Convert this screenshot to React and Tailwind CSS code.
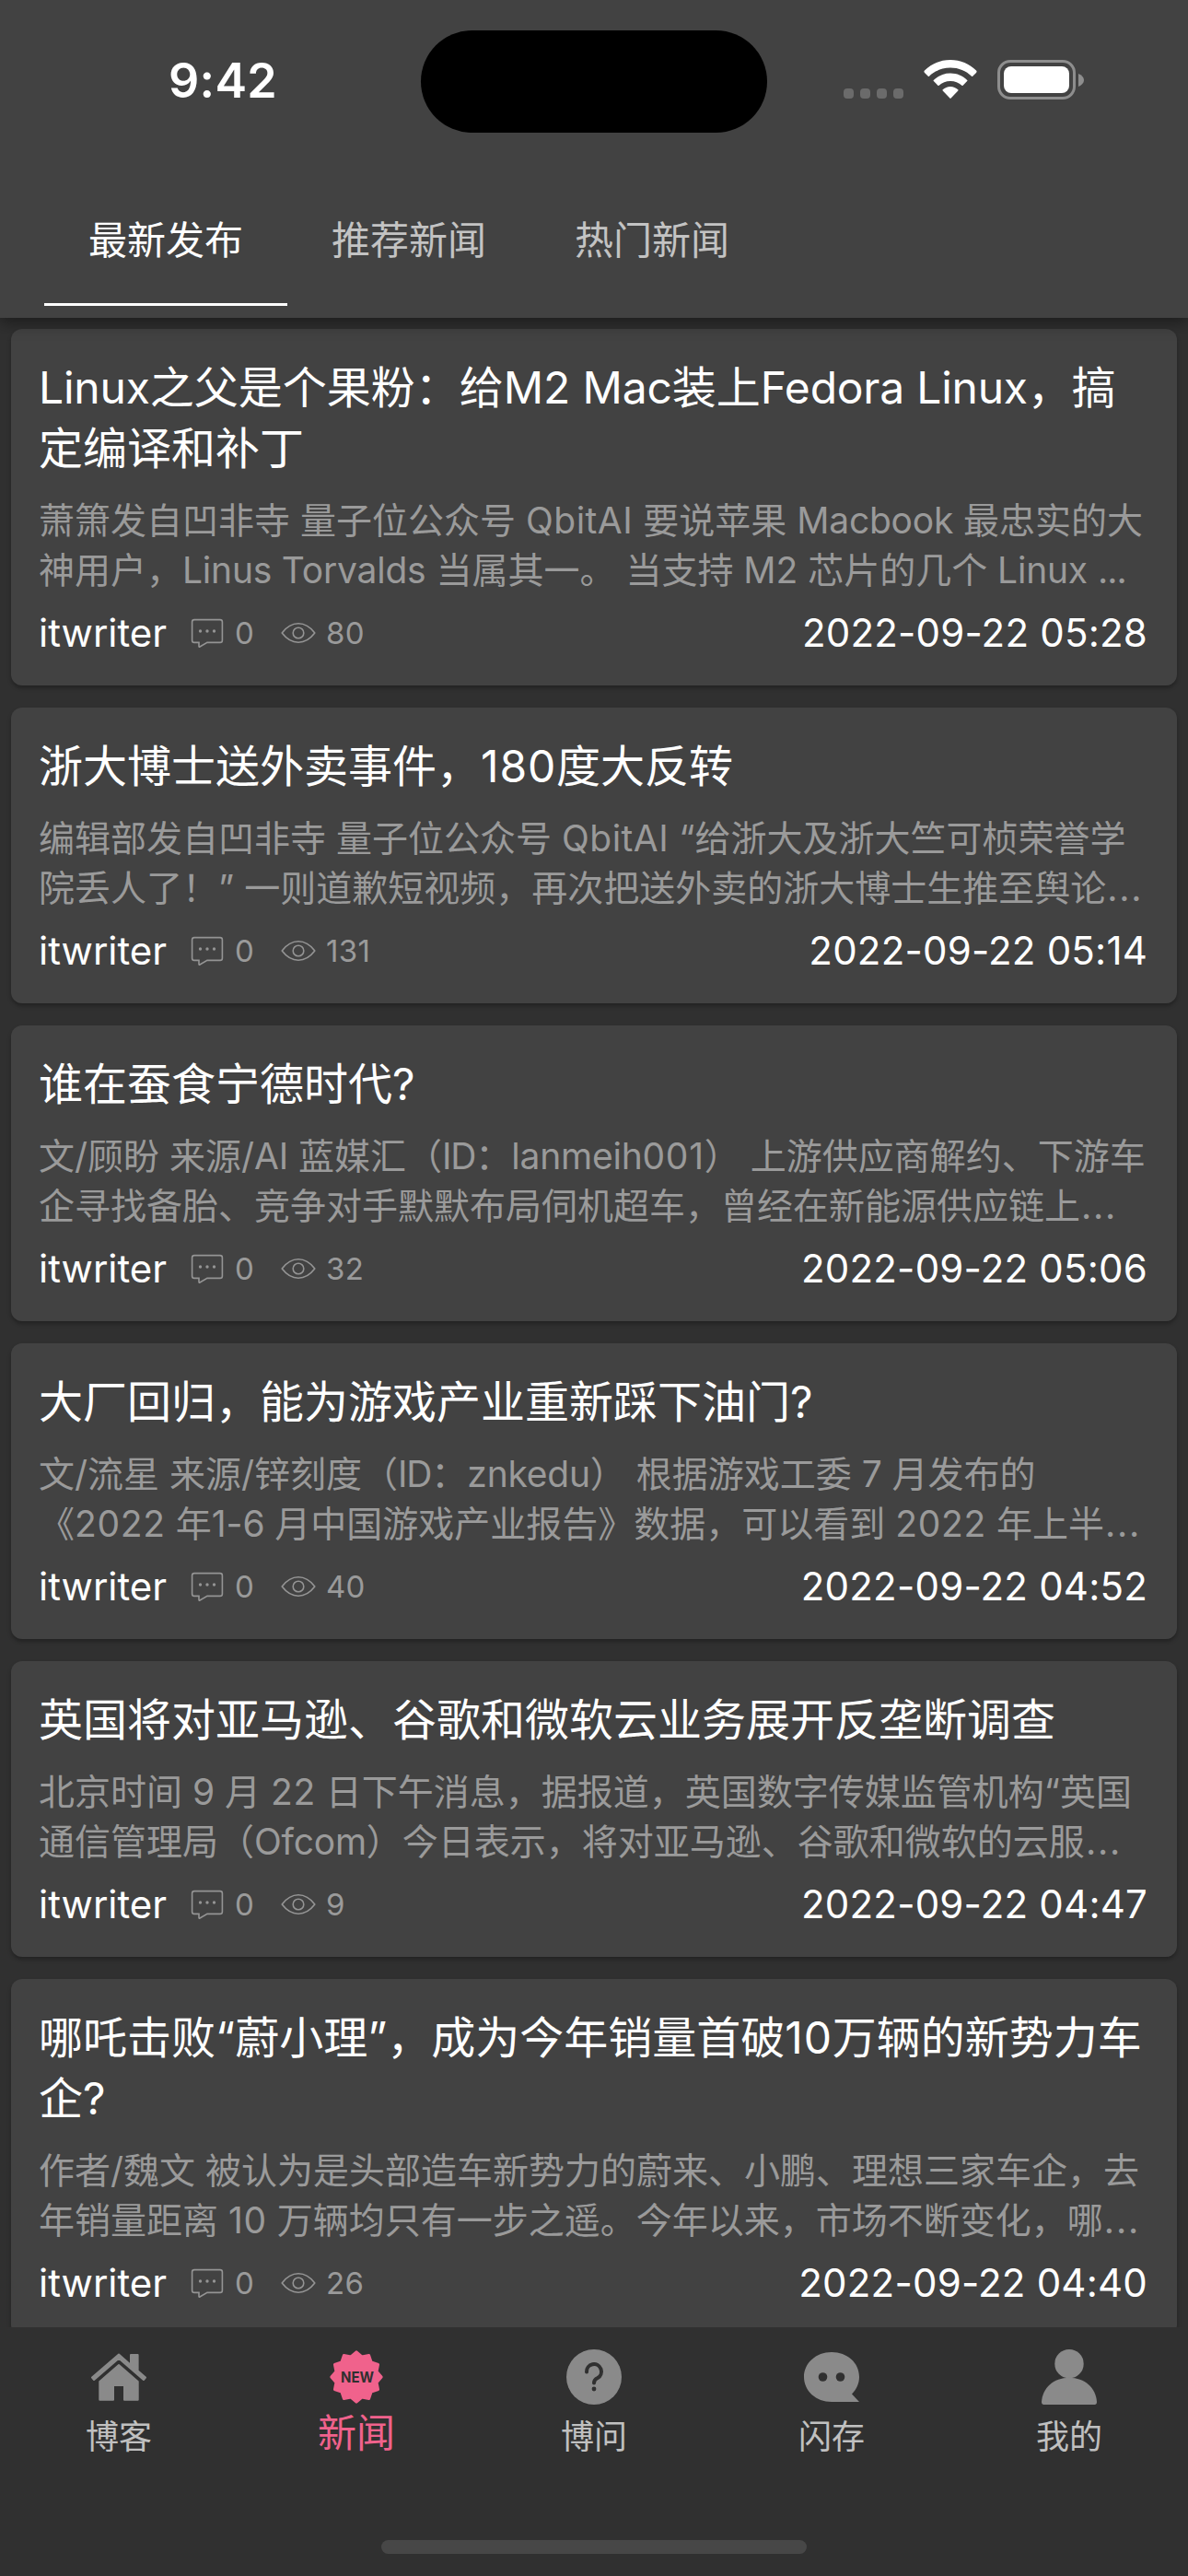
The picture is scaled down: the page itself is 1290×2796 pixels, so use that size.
const ARTICLES = [
  {
    title: ["Linux之父是个果粉：给M2 Mac装上Fedora Linux，搞", "定编译和补丁"],
    summary: ["萧箫发自凹非寺 量子位公众号 QbitAI 要说苹果 Macbook 最忠实的大", "神用户，Linus Torvalds 当属其一。 当支持 M2 芯片的几个 Linux "],
    views: 80,
    time: "05:28",
    tight: true,
  },
  {
    title: ["浙大博士送外卖事件，180度大反转"],
    summary: ["编辑部发自凹非寺 量子位公众号 QbitAI “给浙大及浙大竺可桢荣誉学", "院丢人了！” 一则道歉短视频，再次把送外卖的浙大博士生推至舆论"],
    views: 131,
    time: "05:14",
  },
  {
    title: ["谁在蚕食宁德时代?"],
    summary: ["文/顾盼 来源/AI 蓝媒汇（ID：lanmeih001） 上游供应商解约、下游车", "企寻找备胎、竞争对手默默布局伺机超车，曾经在新能源供应链上"],
    views: 32,
    time: "05:06",
  },
  {
    title: ["大厂回归，能为游戏产业重新踩下油门?"],
    summary: ["文/流星 来源/锌刻度（ID：znkedu） 根据游戏工委 7 月发布的", "《2022 年1-6 月中国游戏产业报告》数据，可以看到 2022 年上半"],
    views: 40,
    time: "04:52",
  },
  {
    title: ["英国将对亚马逊、谷歌和微软云业务展开反垄断调查"],
    summary: ["北京时间 9 月 22 日下午消息，据报道，英国数字传媒监管机构“英国", "通信管理局（Ofcom）今日表示，将对亚马逊、谷歌和微软的云服"],
    views: 9,
    time: "04:47",
  },
  {
    title: ["哪吒击败“蔚小理”，成为今年销量首破10万辆的新势力车", "企?"],
    summary: ["作者/魏文 被认为是头部造车新势力的蔚来、小鹏、理想三家车企，去", "年销量距离 10 万辆均只有一步之遥。今年以来，市场不断变化，哪"],
    views: 26,
    time: "04:40",
  },
];

function tracking(part) {
  if (part === "QbitAI") return "tracking-[0.5px]";
  if (part === "ID") return "tracking-[-1.2px]";
  if (/^\d{2,}$/.test(part)) return "tracking-[0.018em]";
  return "tracking-[-0.22px]";
}

function Mixed({ text }) {
  return text.split(/(QbitAI|\d+|[A-Za-z][A-Za-z ]*[A-Za-z])/).map((part, i) =>
    i % 2 ? (
      <span key={i} className={tracking(part)}>{part}</span>
    ) : (
      part
    )
  );
}

function CommentIcon() {
  return (
    <svg className="h-[34px] w-[36px]" viewBox="0 0 36 34" fill="none" stroke="#949494" strokeWidth="1.6">
      <path d="M4 2.6h28q2.4 0 2.4 2.4v20q0 2.4-2.4 2.4H18l-8 4.6q-1 .4-1-.6v-4H4q-2.4 0-2.4-2.4V5q0-2.4 2.4-2.4z" />
      <g fill="#949494" stroke="none">
        <circle cx="10.5" cy="15" r="1.7" />
        <circle cx="18" cy="15" r="1.7" />
        <circle cx="25.5" cy="15" r="1.7" />
      </g>
    </svg>
  );
}

function EyeIcon() {
  return (
    <svg className="h-[24px] w-[38px]" viewBox="0 0 38 24" fill="none" stroke="#949494" strokeWidth="1.6">
      <path d="M1.2 12Q9 1.8 19 1.8T36.8 12Q29 22.2 19 22.2T1.2 12z" strokeLinejoin="round" />
      <circle cx="19" cy="12" r="5.8" />
    </svg>
  );
}

function Card({ a }) {
  return (
    <article className="shrink-0 rounded-[12px] bg-[#424242] px-[30px] pt-[31px] pb-[30px] shadow-[0_3px_4px_rgba(0,0,0,0.28)]">
      <h2 className="text-[48px] leading-[66px] text-white">
        {a.title.map((l) => (
          <div key={l} className="whitespace-pre"><Mixed text={l} /></div>
        ))}
      </h2>
      <div className="mt-[18px] text-[39px] leading-[54px] text-[#9a9a9a]">
        <div className="whitespace-pre"><Mixed text={a.summary[0]} /></div>
        <div className="whitespace-pre">
          <Mixed text={a.summary[1]} />
          <span className={a.tight ? "tracking-[-0.9px]" : "tracking-[1.8px] pl-[1px]"}>...</span>
        </div>
      </div>
      <div className="mt-[14px] flex h-[54px] items-center text-[42px] leading-[54px] text-white">
        <span className="w-[140px]">itwriter</span>
        <div className="ml-[25px] flex items-center text-[33px] text-[#9a9a9a]">
          <CommentIcon />
          <span className="ml-[12px] w-[50px]">0</span>
          <EyeIcon />
          <span className="ml-[11px] tracking-[0.3px]">{a.views}</span>
        </div>
        <span className="mr-[2px] ml-auto whitespace-pre tracking-[0.2px]">2022-09-22 {a.time}</span>
      </div>
    </article>
  );
}

function StatusBar() {
  return (
    <div className="flex h-[177px] items-start">
      <div className="w-[457px] pt-[58px] pl-[183px] text-[52px] leading-[60px] font-semibold tracking-[0.3px] text-white">9:42</div>
      <div className="mt-[33px] h-[111px] w-[376px] rounded-full bg-black" />
      <div className="mt-[96px] ml-[83px] flex gap-[7px]">
        <i className="size-[11px] rounded-[4px] bg-[#6b6b6b]" />
        <i className="size-[11px] rounded-[4px] bg-[#6b6b6b]" />
        <i className="size-[11px] rounded-[4px] bg-[#6b6b6b]" />
        <i className="size-[11px] rounded-[4px] bg-[#6b6b6b]" />
      </div>
      <svg className="mt-[65px] ml-[22px] h-[43px] w-[58px]" viewBox="0 0 58 43" fill="#fff">
        <path d="M29 0C39.8 0 49.8 4.3 57 11.6Q58.2 12.8 57 14L53.2 17.8Q52.6 18.4 52 17.8C46 12 38 8.6 29 8.6S12 12 6 17.8Q5.4 18.4 4.8 17.8L1 14Q-.2 12.8 1 11.6C8.2 4.3 18.2 0 29 0z" />
        <path d="M29 14.6C36 14.6 42.4 17.4 47.2 21.9Q47.8 22.5 47.2 23.1L42.6 27.7Q42 28.3 41.4 27.7C38 24.7 33.8 23 29 23S20 24.7 16.6 27.7Q16 28.3 15.4 27.7L10.8 23.1Q10.2 22.5 10.8 21.9C15.6 17.4 22 14.6 29 14.6z" />
        <path d="M29 29C32.2 29 35.1 30.3 37.3 32.3Q37.9 32.9 37.3 33.5L29.6 41.6Q29 42.2 28.4 41.6L20.7 33.5Q20.1 32.9 20.7 32.3C22.9 30.3 25.8 29 29 29z" />
      </svg>
      <svg className="mt-[65px] ml-[22px] h-[43px] w-[95px]" viewBox="0 0 95 43">
        <rect x="1.5" y="1.5" width="82" height="40" rx="12.5" fill="none" stroke="#8e8e8e" strokeWidth="3" />
        <rect x="7" y="7" width="71" height="29" rx="8" fill="#fff" />
        <path d="M88 15c3.6 1.5 6 4 6 7s-2.4 5.5-6 7z" fill="#8e8e8e" />
      </svg>
    </div>
  );
}

function Tab({ label, active }) {
  return (
    <div
      className={
        active
          ? "flex h-[155px] w-[264px] justify-center border-b-[3px] border-white pt-[60px] text-[42px] leading-[48px] text-white"
          : "flex h-[155px] w-[264px] justify-center pt-[60px] text-[42px] leading-[48px] text-[#c3c3c3]"
      }
    >
      {label}
    </div>
  );
}

function HomeIcon() {
  return (
    <svg className="size-[60px]" viewBox="0 0 60 60" fill="#8a8a8a" stroke="#8a8a8a" strokeWidth="2" strokeLinejoin="round">
      <path d="M30 5.5L43 17V6h7.6V23.3L59 30.5L56.9 33L30 9.7L3.1 33L1 30.5z" />
      <path d="M30 17L50.7 35V54.7H36V39H24V54.7H9.3V35z" />
    </svg>
  );
}

const STAR = Array.from({ length: 24 }, (_, i) => {
  const r = i % 2 ? 22.8 : 27.2;
  const t = (i * Math.PI) / 12;
  return `${(30 + r * Math.sin(t)).toFixed(2)},${(30 - r * Math.cos(t)).toFixed(2)}`;
}).join(" ");

function NewIcon() {
  return (
    <svg className="size-[60px]" viewBox="0 0 60 60">
      <polygon points={STAR} fill="#f0628c" stroke="#f0628c" strokeWidth="3" strokeLinejoin="round" />
      <text x="31" y="36" textAnchor="middle" textLength="36" lengthAdjust="spacingAndGlyphs" fontSize="16.5" fontWeight="700" fill="#303030">NEW</text>
    </svg>
  );
}

function AskIcon() {
  return (
    <svg className="size-[60px]" viewBox="0 0 60 60">
      <circle cx="30" cy="30" r="30" fill="#8a8a8a" />
      <path d="M22 24.5A8 8 0 1 1 34 31C31 32.4 30 33.5 30 36.5" fill="none" stroke="#303030" strokeWidth="4" strokeLinecap="round" />
      <circle cx="30" cy="43" r="2.4" fill="#303030" />
    </svg>
  );
}

function ChatIcon() {
  return (
    <svg className="size-[60px]" viewBox="0 0 60 60" fill="#8a8a8a">
      <path d="M30 3C47 3 60 14.5 60 30C60 37 57 43.5 52 48.5L60 57H30C13 57 0 45 0 30S13 3 30 3z" />
      <circle cx="20.5" cy="30" r="4.8" fill="#303030" />
      <circle cx="39.5" cy="30" r="4.8" fill="#303030" />
    </svg>
  );
}

function PersonIcon() {
  return (
    <svg className="size-[60px]" viewBox="0 0 60 60" fill="#8a8a8a">
      <circle cx="30" cy="15.7" r="15.7" />
      <path d="M0 57C1 42 13 30.8 30 30.8S59 42 60 57Q60 60 57.5 60H2.5Q0 60 0 57z" />
    </svg>
  );
}

const NAV = [
  { label: "博客", Icon: HomeIcon },
  { label: "新闻", Icon: NewIcon, active: true },
  { label: "博问", Icon: AskIcon },
  { label: "闪存", Icon: ChatIcon },
  { label: "我的", Icon: PersonIcon },
];

export default function App() {
  return (
    <div lang="zh-CN" className="flex h-[2796px] w-[1290px] flex-col overflow-hidden bg-[#303030] font-['Inter','Noto_Sans_CJK_SC',sans-serif]">
      <header className="z-10 h-[345px] shrink-0 bg-[#424242] shadow-[0_6px_16px_rgba(0,0,0,0.4)]">
        <StatusBar />
        <nav className="flex px-[48px]">
          <Tab label="最新发布" active />
          <Tab label="推荐新闻" />
          <Tab label="热门新闻" />
        </nav>
      </header>
      <main className="flex h-[2181px] shrink-0 flex-col gap-[24px] overflow-hidden px-[12px] pt-[12px]">
        {ARTICLES.map((a) => (
          <Card key={a.time} a={a} />
        ))}
      </main>
      <footer className="flex flex-1 flex-col bg-[#303030]">
        <div className="grid grid-cols-5 pt-[24px]">
          {NAV.map(({ label, Icon, active }) => (
            <div key={label} className="flex h-[207px] flex-col items-center">
              <Icon />
              <span className={active ? "mt-[7px] text-[42px] leading-[48px] text-[#f0628c]" : "mt-[15px] text-[36px] leading-[40px] text-[#c0c0c0]"}>
                {label}
              </span>
            </div>
          ))}
        </div>
        <div className="mx-auto h-[15px] w-[462px] rounded-full bg-[#474747]" />
      </footer>
    </div>
  );
}
